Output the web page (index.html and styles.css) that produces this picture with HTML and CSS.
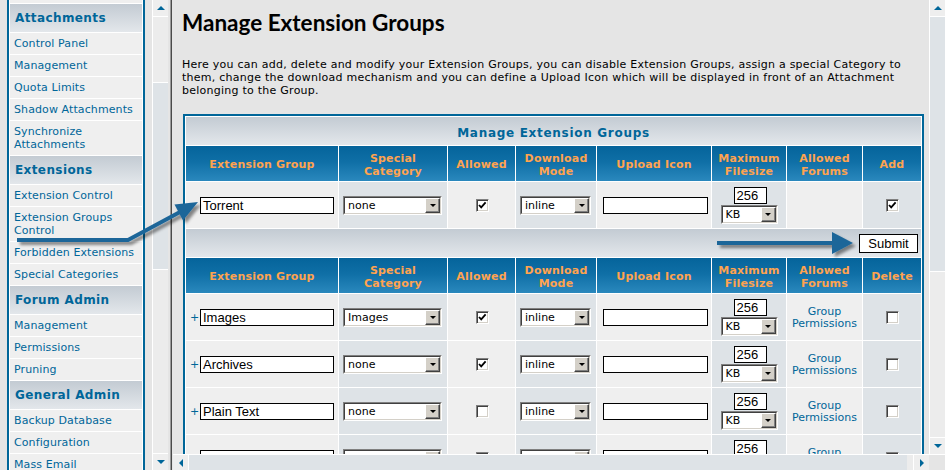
FILE: index.html
```html
<!DOCTYPE html>
<html>
<head>
<meta charset="utf-8">
<title>Manage Extension Groups</title>
<link rel="stylesheet" href="styles.css">
</head>
<body>
<div class="frames">
  <aside class="nav-frame">
    <div class="nav-view">
      <div class="nav-table">
        <div class="nav-stub"></div>
        <div class="nav-head">Attachments</div>
        <a class="nav-item">Control Panel</a>
        <a class="nav-item">Management</a>
        <a class="nav-item">Quota Limits</a>
        <a class="nav-item">Shadow Attachments</a>
        <a class="nav-item">Synchronize Attachments</a>
        <div class="nav-head">Extensions</div>
        <a class="nav-item">Extension Control</a>
        <a class="nav-item">Extension Groups Control</a>
        <a class="nav-item">Forbidden Extensions</a>
        <a class="nav-item">Special Categories</a>
        <div class="nav-head">Forum Admin</div>
        <a class="nav-item">Management</a>
        <a class="nav-item">Permissions</a>
        <a class="nav-item">Pruning</a>
        <div class="nav-head">General Admin</div>
        <a class="nav-item">Backup Database</a>
        <a class="nav-item">Configuration</a>
        <a class="nav-item">Mass Email</a>
        <a class="nav-item">Restore Database</a>
      </div>
    </div>
    <div class="vscroll">
      <div class="sb-btn"><span class="tri tri-up"></span></div>
      <div class="sb-track"><div class="sb-thumb nav-thumb"></div></div>
      <div class="sb-btn sb-btn-end"><span class="tri tri-down"></span></div>
    </div>
  </aside>
  <div class="divider"></div>
  <div class="main-frame">
    <div class="main-row">
      <div class="main-view">
        <h1 class="page-title">Manage Extension Groups</h1>
        <p class="page-desc">Here you can add, delete and modify your Extension Groups, you can disable Extension Groups, assign a special Category to<br>them, change the download mechanism and you can define a Upload Icon which will be displayed in front of an Attachment<br>belonging to the Group.</p>

        <div class="grid">
          <div class="cat cat-head">Manage Extension Groups</div>

          <div class="th">Extension Group</div>
          <div class="th">Special<br>Category</div>
          <div class="th">Allowed</div>
          <div class="th">Download<br>Mode</div>
          <div class="th">Upload Icon</div>
          <div class="th">Maximum<br>Filesize</div>
          <div class="th">Allowed<br>Forums</div>
          <div class="th">Add</div>

          <div class="td r1 c-name"><span class="plus"></span><span class="field name-field">Torrent</span></div>
          <div class="td r2 c-cat"><span class="sel cat-sel"><span class="sel-in"><span class="sel-text">none</span><span class="sel-btn"><span class="tri-sm"></span></span></span></span></div>
          <div class="td r1 c-center"><span class="chk"><svg viewBox="0 0 11 11" width="11" height="11"><polyline points="2,5 4.2,7.4 8.6,2.4" fill="none" stroke="#000" stroke-width="1.8"/></svg></span></div>
          <div class="td r2 c-mode"><span class="sel mode-sel"><span class="sel-in"><span class="sel-text">inline</span><span class="sel-btn"><span class="tri-sm"></span></span></span></span></div>
          <div class="td r1 c-icon"><span class="field icon-field"></span></div>
          <div class="td r2 c-size"><span class="field size-field">256</span><span class="sel unit-sel"><span class="sel-in"><span class="sel-text">KB</span><span class="sel-btn"><span class="tri-sm"></span></span></span></span></div>
          <div class="td r1 c-forums"></div>
          <div class="td r2 c-center"><span class="chk"><svg viewBox="0 0 11 11" width="11" height="11"><polyline points="2,5 4.2,7.4 8.6,2.4" fill="none" stroke="#000" stroke-width="1.8"/></svg></span></div>

          <div class="cat cat-bottom"><span class="btn">Submit</span></div>

          <div class="th">Extension Group</div>
          <div class="th">Special<br>Category</div>
          <div class="th">Allowed</div>
          <div class="th">Download<br>Mode</div>
          <div class="th">Upload Icon</div>
          <div class="th">Maximum<br>Filesize</div>
          <div class="th">Allowed<br>Forums</div>
          <div class="th">Delete</div>

          <div class="td r1 c-name"><span class="plus">+</span><span class="field name-field">Images</span></div>
          <div class="td r2 c-cat"><span class="sel cat-sel"><span class="sel-in"><span class="sel-text">Images</span><span class="sel-btn"><span class="tri-sm"></span></span></span></span></div>
          <div class="td r1 c-center"><span class="chk"><svg viewBox="0 0 11 11" width="11" height="11"><polyline points="2,5 4.2,7.4 8.6,2.4" fill="none" stroke="#000" stroke-width="1.8"/></svg></span></div>
          <div class="td r2 c-mode"><span class="sel mode-sel"><span class="sel-in"><span class="sel-text">inline</span><span class="sel-btn"><span class="tri-sm"></span></span></span></span></div>
          <div class="td r1 c-icon"><span class="field icon-field"></span></div>
          <div class="td r2 c-size"><span class="field size-field">256</span><span class="sel unit-sel"><span class="sel-in"><span class="sel-text">KB</span><span class="sel-btn"><span class="tri-sm"></span></span></span></span></div>
          <div class="td r1 c-forums"><a class="perm">Group<br>Permissions</a></div>
          <div class="td r2 c-center"><span class="chk"></span></div>

          <div class="td r1 c-name"><span class="plus">+</span><span class="field name-field">Archives</span></div>
          <div class="td r2 c-cat"><span class="sel cat-sel"><span class="sel-in"><span class="sel-text">none</span><span class="sel-btn"><span class="tri-sm"></span></span></span></span></div>
          <div class="td r1 c-center"><span class="chk"><svg viewBox="0 0 11 11" width="11" height="11"><polyline points="2,5 4.2,7.4 8.6,2.4" fill="none" stroke="#000" stroke-width="1.8"/></svg></span></div>
          <div class="td r2 c-mode"><span class="sel mode-sel"><span class="sel-in"><span class="sel-text">inline</span><span class="sel-btn"><span class="tri-sm"></span></span></span></span></div>
          <div class="td r1 c-icon"><span class="field icon-field"></span></div>
          <div class="td r2 c-size"><span class="field size-field">256</span><span class="sel unit-sel"><span class="sel-in"><span class="sel-text">KB</span><span class="sel-btn"><span class="tri-sm"></span></span></span></span></div>
          <div class="td r1 c-forums"><a class="perm">Group<br>Permissions</a></div>
          <div class="td r2 c-center"><span class="chk"></span></div>

          <div class="td r1 c-name"><span class="plus">+</span><span class="field name-field">Plain Text</span></div>
          <div class="td r2 c-cat"><span class="sel cat-sel"><span class="sel-in"><span class="sel-text">none</span><span class="sel-btn"><span class="tri-sm"></span></span></span></span></div>
          <div class="td r1 c-center"><span class="chk"></span></div>
          <div class="td r2 c-mode"><span class="sel mode-sel"><span class="sel-in"><span class="sel-text">inline</span><span class="sel-btn"><span class="tri-sm"></span></span></span></span></div>
          <div class="td r1 c-icon"><span class="field icon-field"></span></div>
          <div class="td r2 c-size"><span class="field size-field">256</span><span class="sel unit-sel"><span class="sel-in"><span class="sel-text">KB</span><span class="sel-btn"><span class="tri-sm"></span></span></span></span></div>
          <div class="td r1 c-forums"><a class="perm">Group<br>Permissions</a></div>
          <div class="td r2 c-center"><span class="chk"></span></div>

          <div class="td r1 c-name"><span class="plus">+</span><span class="field name-field">Documents</span></div>
          <div class="td r2 c-cat"><span class="sel cat-sel"><span class="sel-in"><span class="sel-text">none</span><span class="sel-btn"><span class="tri-sm"></span></span></span></span></div>
          <div class="td r1 c-center"><span class="chk"><svg viewBox="0 0 11 11" width="11" height="11"><polyline points="2,5 4.2,7.4 8.6,2.4" fill="none" stroke="#000" stroke-width="1.8"/></svg></span></div>
          <div class="td r2 c-mode"><span class="sel mode-sel"><span class="sel-in"><span class="sel-text">inline</span><span class="sel-btn"><span class="tri-sm"></span></span></span></span></div>
          <div class="td r1 c-icon"><span class="field icon-field"></span></div>
          <div class="td r2 c-size"><span class="field size-field">256</span><span class="sel unit-sel"><span class="sel-in"><span class="sel-text">KB</span><span class="sel-btn"><span class="tri-sm"></span></span></span></span></div>
          <div class="td r1 c-forums"><a class="perm">Group<br>Permissions</a></div>
          <div class="td r2 c-center"><span class="chk"></span></div>
        </div>
      </div>
      <div class="vscroll main-vscroll">
        <div class="sb-btn"><span class="tri tri-up"></span></div>
        <div class="sb-track"><div class="sb-thumb main-thumb"></div></div>
        <div class="sb-btn sb-btn-end"><span class="tri tri-down"></span></div>
      </div>
    </div>
    <div class="hscroll">
      <div class="hs-btn hs-left"><span class="tri tri-left"></span></div>
      <div class="hs-thumb"></div>
      <div class="hs-track"></div>
      <div class="hs-btn hs-right"><span class="tri tri-right"></span></div>
      <div class="hs-corner"></div>
    </div>
  </div>
</div>

<svg class="arrows" width="945" height="470" viewBox="0 0 945 470">
  <defs>
    <filter id="shadow" x="-20%" y="-50%" width="140%" height="200%">
      <feDropShadow dx="3" dy="3" stdDeviation="1.6" flood-color="#000" flood-opacity="0.45"/>
    </filter>
  </defs>
  <g filter="url(#shadow)" fill="#1d6699" stroke="#1d6699">
    <polyline points="17,240 128,240 180,212" fill="none" stroke-width="4" stroke-linejoin="miter"/>
    <polygon points="198,202 174.5,204.5 183,220.5" stroke="none"/>
    <line x1="717" y1="243" x2="838" y2="243" stroke-width="4"/>
    <polygon points="853,243 832,232 832,254" stroke="none"/>
  </g>
</svg>
</body>
</html>
```

FILE: styles.css
```css
* {
  box-sizing: border-box;
}

html, body {
  margin: 0;
  padding: 0;
}

body {
  width: 945px;
  height: 470px;
  overflow: hidden;
  position: relative;
  background: #e5e5e5;
  font-family: "DejaVu Sans", Verdana, sans-serif;
  font-size: 11px;
  color: #000;
}

.frames {
  display: flex;
  height: 470px;
}

/* ---------- left navigation frame ---------- */
.nav-frame {
  width: 168px;
  height: 470px;
  display: flex;
  background: #e5e5e5;
}

.nav-view {
  width: 152px;
  height: 470px;
  overflow: hidden;
  padding: 0 7px;
}

.nav-table {
  display: flex;
  flex-direction: column;
  gap: 1px;
  padding: 0 1px;
  background: #fff;
  border-left: 2px solid #006699;
  border-right: 2px solid #006699;
}

.nav-stub {
  height: 3px;
  background: #efefef;
}

.nav-head {
  height: 28px;
  display: flex;
  align-items: center;
  padding: 1px 0 0 5px;
  background: linear-gradient(#c3cbd3, #d3d9df 50%, #e3e7eb);
  color: #006699;
  font-weight: bold;
  font-size: 12px;
  line-height: 15px;
  letter-spacing: 0.4px;
}

.nav-item {
  display: block;
  background: #efefef;
  color: #006699;
  padding: 4px 4px;
  line-height: 13px;
  letter-spacing: 0.1px;
  text-decoration: none;
}

/* ---------- scrollbars ---------- */
.vscroll {
  width: 16px;
  display: flex;
  flex-direction: column;
  border-left: 1px solid #fff;
  background: #ececec;
}

.sb-btn {
  height: 17px;
  flex: none;
  background: #eeeeee;
  border-bottom: 1px solid #fff;
  display: flex;
  align-items: center;
  justify-content: center;
}

.sb-btn-end {
  border-bottom: none;
  border-top: 1px solid #fff;
}

.sb-track {
  flex: 1;
  overflow: hidden;
  background: #ececec;
}

.sb-thumb {
  background: #dee3e7;
  border-top: 1px solid #fff;
  border-bottom: 1px solid #fff;
}

.nav-thumb {
  margin-top: 65px;
  height: 188px;
}

.main-thumb {
  margin-top: -1px;
  height: 256px;
}

.tri {
  width: 0;
  height: 0;
  display: block;
}

.tri-up {
  border-left: 4px solid transparent;
  border-right: 4px solid transparent;
  border-bottom: 4px solid #006699;
}

.tri-down {
  border-left: 4px solid transparent;
  border-right: 4px solid transparent;
  border-top: 4px solid #006699;
}

.tri-left {
  border-top: 4px solid transparent;
  border-bottom: 4px solid transparent;
  border-right: 4px solid #006699;
}

.tri-right {
  border-top: 4px solid transparent;
  border-bottom: 4px solid transparent;
  border-left: 4px solid #006699;
}

.divider {
  width: 5px;
  flex: none;
  background: linear-gradient(to right, #e5e5e5 0 2px, #9a9a9a 2px 3px, #4a4a4a 3px 4px, #e5e5e5 4px 5px);
}

/* ---------- main frame ---------- */
.main-frame {
  width: 772px;
  display: flex;
  flex-direction: column;
}

.main-row {
  height: 454px;
  display: flex;
}

.main-view {
  width: 756px;
  height: 454px;
  overflow: hidden;
  padding: 9px 0 0 9px;
}

.hscroll {
  height: 16px;
  display: flex;
  border-top: 1px solid #fff;
  background: #dee3e7;
}

.hs-btn {
  width: 16px;
  background: #eeeeee;
  display: flex;
  align-items: center;
  justify-content: center;
}

.hs-left {
  border-right: 1px solid #fff;
}

.hs-right {
  border-left: 1px solid #fff;
}

.hs-thumb {
  flex: 1;
  background: #dee3e7;
}

.hs-track {
  width: 6px;
  background: #ececec;
}

.hs-corner {
  width: 16px;
  background: #e5e5e5;
}

.page-title {
  margin: 0 0 21px;
  font-family: Lato, "Open Sans", sans-serif;
  font-weight: bold;
  font-size: 22.5px;
  line-height: 28px;
  color: #000;
}

.page-desc {
  margin: 0 0 17px;
  line-height: 13px;
  letter-spacing: 0.25px;
  white-space: nowrap;
}

/* ---------- grid table ---------- */
.grid {
  margin-left: 1px;
  width: 741px;
  display: grid;
  grid-template-columns: 152px 108px 67px 80px 114px 74px 75px 58px;
  gap: 1px;
  padding: 1px;
  background: #fff;
  border: 2px solid #006699;
}

.cat {
  grid-column: 1 / -1;
  height: 28px;
  background: linear-gradient(#c3cbd3, #d3d9df 50%, #e3e7eb);
  display: flex;
  align-items: center;
}

.cat-head {
  justify-content: center;
  padding-top: 3px;
  color: #006699;
  font-weight: bold;
  font-size: 12px;
  letter-spacing: 0.7px;
}

.cat-bottom {
  justify-content: flex-end;
  padding-right: 3px;
}

.th {
  height: 35px;
  display: flex;
  align-items: center;
  justify-content: center;
  text-align: center;
  padding-top: 2px;
  background: linear-gradient(#05649b, #0f6fa6 45%, #2a88bd);
  color: #ffa34f;
  font-weight: bold;
  font-size: 11px;
  line-height: 13px;
  letter-spacing: 0.2px;
}

.td {
  height: 46px;
  display: flex;
  align-items: center;
}

.r1 {
  background: #efefef;
}

.r2 {
  background: #dee3e7;
}

.c-name {
  padding-left: 4px;
}

.plus {
  width: 10px;
  flex: none;
  color: #006699;
  font-size: 11px;
  line-height: 13px;
}

.c-cat,
.c-mode {
  padding-left: 4px;
}

.c-icon {
  padding-left: 6px;
}

.c-center {
  justify-content: center;
}

.c-size {
  flex-direction: column;
  justify-content: center;
  gap: 1px;
}

.c-forums {
  justify-content: center;
  text-align: center;
  padding-top: 1px;
}

.perm {
  color: #006699;
  line-height: 12px;
  text-decoration: none;
}

/* form-like controls */
.field {
  display: block;
  height: 17px;
  border: 1px solid #000;
  background: #fff;
  padding: 0 2px;
  font-family: "Liberation Sans", Arial, sans-serif;
  font-size: 13px;
  line-height: 15px;
  white-space: nowrap;
  overflow: hidden;
}

.name-field {
  width: 134px;
}

.icon-field {
  width: 105px;
}

.size-field {
  width: 33px;
  margin-left: 2px;
}

.sel {
  display: block;
  height: 19px;
  border: 1px solid;
  border-color: #808080 #ffffff #ffffff #808080;
  background: #fff;
}

.sel-in {
  display: flex;
  height: 100%;
  border: 1px solid;
  border-color: #404040 #d4d0c8 #d4d0c8 #404040;
  background: #fff;
}

.sel-text {
  flex: 1;
  padding-left: 3px;
  line-height: 15px;
  white-space: nowrap;
  overflow: hidden;
}

.sel-btn {
  width: 15px;
  flex: none;
  display: flex;
  align-items: center;
  justify-content: center;
  background: #d4d0c8;
  border: 1px solid;
  border-color: #ffffff #404040 #404040 #ffffff;
  box-shadow: inset -1px -1px #808080;
}

.tri-sm {
  width: 0;
  height: 0;
  border-left: 3px solid transparent;
  border-right: 3px solid transparent;
  border-top: 3px solid #000;
  margin-top: 1px;
}

.cat-sel {
  width: 99px;
}

.mode-sel {
  width: 71px;
}

.unit-sel {
  width: 57px;
}

.chk {
  width: 13px;
  height: 13px;
  display: flex;
  align-items: center;
  justify-content: center;
  border: 1px solid;
  border-color: #808080 #ffffff #ffffff #808080;
  background: #fff;
  box-shadow: inset 1px 1px #404040, inset -1px -1px #d4d0c8;
  margin-left: 1px;
}

.chk svg {
  display: block;
}

.btn {
  display: flex;
  align-items: center;
  justify-content: center;
  width: 59px;
  height: 19px;
  border: 1px solid #000;
  background: #fff;
  font-family: "Liberation Sans", Arial, sans-serif;
  font-size: 13px;
}

/* ---------- annotation arrows (overlay) ---------- */
.arrows {
  position: absolute;
  left: 0;
  top: 0;
  pointer-events: none;
}
```
